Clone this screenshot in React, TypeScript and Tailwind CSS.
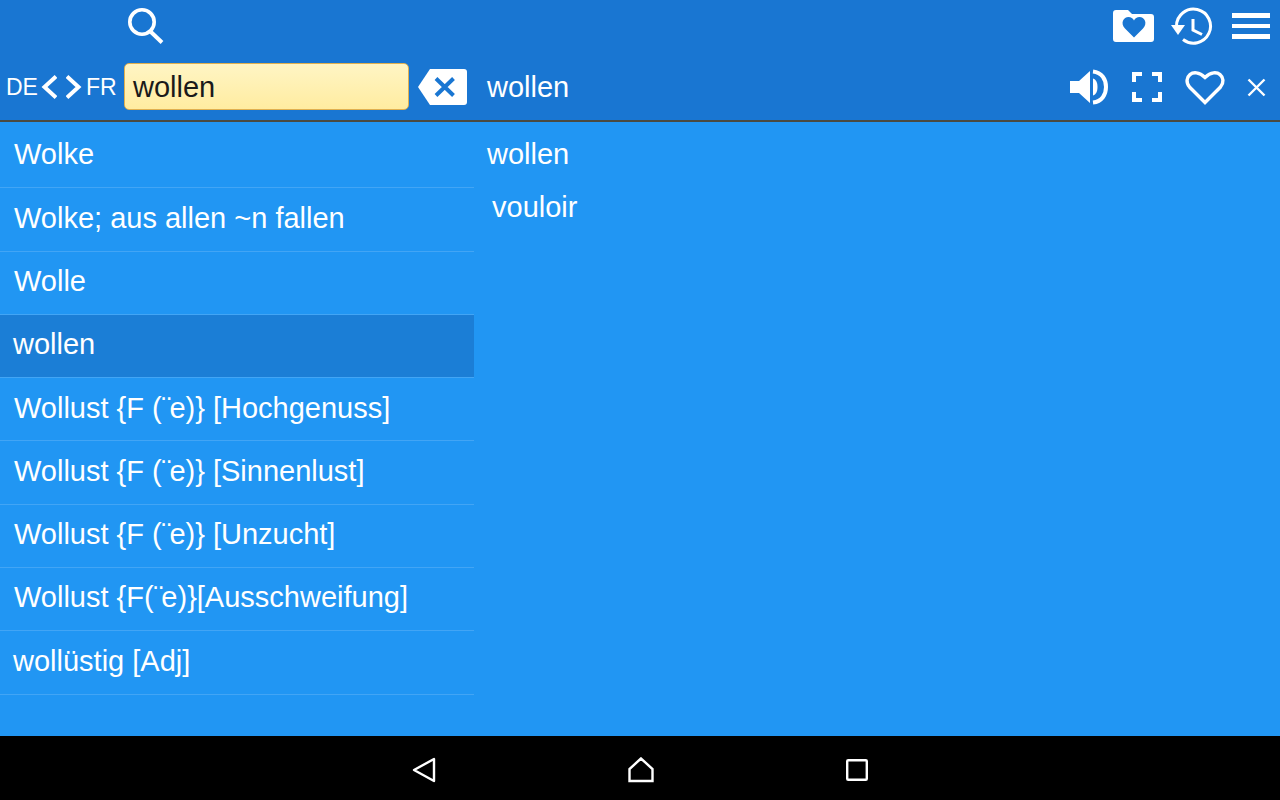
const entries = [
  { text: "Wolke", pad: "pl-3.5" },
  { text: "Wolke; aus allen ~n fallen", pad: "pl-3.5" },
  { text: "Wolle", pad: "pl-3.5" },
  { text: "wollen", pad: "pl-[13px]", active: true },
  { text: "Wollust {F (¨e)} [Hochgenuss]", pad: "pl-3.5" },
  { text: "Wollust {F (¨e)} [Sinnenlust]", pad: "pl-3.5" },
  { text: "Wollust {F (¨e)} [Unzucht]", pad: "pl-3.5" },
  { text: "Wollust {F(¨e)}[Ausschweifung]", pad: "pl-3.5" },
  { text: "wollüstig [Adj]", pad: "pl-[13px]" },
];

// the diaeresis sits tighter in the reference than in Liberation Sans
function EntryText({ text }: { text: string }) {
  const parts = text.split("¨");
  if (parts.length === 1) return <span>{text}</span>;
  return (
    <span>
      {parts[0]}
      <span className="tracking-[-2px]">¨</span>
      {parts[1]}
    </span>
  );
}

function SearchIcon() {
  return (
    <svg width="38" height="38" viewBox="0 0 38 38" fill="none" stroke="white" strokeWidth="3.6">
      <circle cx="15" cy="15" r="12.200" />
      <path d="M24 25 L35 35.500" strokeWidth="4" />
    </svg>
  );
}

function FolderHeart() {
  return (
    <svg width="41" height="32" viewBox="0 0 41 32">
      <path
        fill="white"
        d="M3 0h12l4 4h19a3 3 0 0 1 3 3v22a3 3 0 0 1-3 3H3a3 3 0 0 1-3-3V3a3 3 0 0 1 3-3z"
      />
      <path
        fill="#1976d2"
        d="M21 27.500L12 18.500C7 13 10.500 7 15.500 7 18 7 20 8.500 21 10.500 22 8.500 24 7 26.500 7 31.500 7 35 13 30 18.500z"
      />
    </svg>
  );
}

function HistoryIcon() {
  return (
    <svg width="42" height="38" viewBox="0 0 42 38" fill="none" stroke="white" strokeWidth="3">
      <path d="M5.500 19A17 17 0 1 1 12 32.500" />
      <path d="M0 18h14l-7 10z" fill="white" stroke="none" />
      <path d="M22 12v11l9 4.500" />
    </svg>
  );
}

function Hamburger() {
  return (
    <div className="flex w-[38px] flex-col gap-[6px]">
      <div className="h-[4.5px] bg-white" />
      <div className="h-[4.5px] bg-white" />
      <div className="h-[4.5px] bg-white" />
    </div>
  );
}

function Speaker() {
  return (
    <svg width="38" height="36" viewBox="0 0 38 36" fill="none">
      <path d="M0 12h9L20 2v32L9 24H0z" fill="white" />
      <path d="M23 9.500c3.500 1 4.500 5 4.500 8.500s-1 7.500-4.500 8.500z" fill="white" />
      <path d="M23 2.500c9 1 13 8 13 15.500s-4 14.500-13 15.500" stroke="white" strokeWidth="4" />
    </svg>
  );
}

function Fullscreen() {
  return (
    <svg width="30" height="30" viewBox="0 0 30 30" fill="none" stroke="white" strokeWidth="4">
      <path d="M2 10V2h8M20 2h8v8M28 20v8h-8M10 28H2v-8" />
    </svg>
  );
}

function HeartOutline() {
  return (
    <svg width="40" height="36" viewBox="0 0 40 36" fill="none" stroke="white" strokeWidth="3.400">
      <path d="M20 33.500L4.500 18C-3 9 8-3 20 8.500 32-3 43 9 35.500 18z" />
    </svg>
  );
}

function CloseIcon() {
  return (
    <svg width="19" height="19" viewBox="0 0 19 19" fill="none" stroke="white" strokeWidth="2.400">
      <path d="M1.500 1.500l16 16M17.500 1.500l-16 16" />
    </svg>
  );
}

function Chevron({ flip }: { flip?: boolean }) {
  return (
    <svg width="16" height="24" viewBox="0 0 16 24" fill="none" stroke="white" strokeWidth="4" className={flip ? "rotate-180" : ""}>
      <path d="M15 1.500L3.500 12 15 22.500" />
    </svg>
  );
}

function ClearIcon() {
  return (
    <svg width="50" height="36" viewBox="0 0 50 36">
      <path fill="white" d="M13 0h34a3 3 0 0 1 3 3v30a3 3 0 0 1-3 3H13L1 18z" />
      <path d="M19 9.500l17.500 17M36.500 9.500L19 26.500" stroke="#1976d2" strokeWidth="4" fill="none" />
    </svg>
  );
}

export default function App() {
  return (
    <div className="flex h-[800px] w-[1280px] flex-col overflow-hidden bg-[#2196f3] font-['Liberation_Sans',sans-serif] text-white">
      {/* Header */}
      <div className="h-[122px] shrink-0 border-b-2 border-[#4a4a40] bg-[#1976d2]">
        <div className="flex h-[52px] items-center pl-[127px] pr-[10px]">
          <SearchIcon />
          <div className="ml-auto flex items-center">
            <FolderHeart />
            <div className="ml-[17px]">
              <HistoryIcon />
            </div>
            <div className="ml-[19px]">
              <Hamburger />
            </div>
          </div>
        </div>
        <div className="flex h-[68px] items-center pt-0.5">
          <div className="flex w-[124px] items-center pl-1.5 text-[23px]">
            <span className="w-[31px]">DE</span>
            <span className="w-1" />
            <Chevron />
            <span className="w-[9px]" />
            <Chevron flip />
            <span className="w-1" />
            <span>FR</span>
          </div>
          <div className="-mt-[2px] flex h-[47px] w-[285px] items-center rounded-[5px] border border-[#e0b050] bg-gradient-to-b from-[#fff5c4] to-[#ffeca0] pl-2 pt-1 text-[29px] text-[#1a1a1a]">
            wollen
          </div>
          <div className="ml-2">
            <ClearIcon />
          </div>
          <div className="ml-5 pt-0.5 text-[29px]">wollen</div>
          <div className="ml-auto flex items-center pr-[14px]">
            <Speaker />
            <div className="ml-[24px]">
              <Fullscreen />
            </div>
            <div className="ml-[23px]">
              <HeartOutline />
            </div>
            <div className="ml-[22px]">
              <CloseIcon />
            </div>
          </div>
        </div>
      </div>

      {/* Content */}
      <div className="flex min-h-0 flex-1 pt-[3px]">
        <div className="w-[474px] shrink-0">
          {entries.map((e) => (
            <div
              key={e.text}
              className={`flex h-[63.3px] items-center border-b border-[#42a5f5] pb-0.5 text-[29px] ${e.pad} ${e.active ? "bg-[#1b7ed6]" : ""}`}
            >
              <EntryText text={e.text} />
            </div>
          ))}
        </div>
        <div className="flex-1 pl-[13px] text-[29px]">
          <div className="flex h-[59px] items-center">wollen</div>
          <div className="ml-[5px] mt-0.5">vouloir</div>
        </div>
      </div>

      {/* Android nav bar */}
      <div className="flex h-16 shrink-0 items-center justify-center gap-[192px] bg-black pt-1">
        <svg width="24" height="26" viewBox="0 0 24 26" fill="none" stroke="white" strokeWidth="2.400">
          <path d="M22 2v22L2 13z" strokeLinejoin="round" />
        </svg>
        <svg width="26" height="26" viewBox="0 0 26 26" fill="none" stroke="white" strokeWidth="2.400">
          <path d="M13 1.500L1.500 12v12h23V12z" />
        </svg>
        <svg width="22" height="22" viewBox="0 0 22 22" fill="none" stroke="white" strokeWidth="2.400">
          <rect x="1.200" y="1.200" width="19.600" height="19.600" rx="1" />
        </svg>
      </div>
    </div>
  );
}
